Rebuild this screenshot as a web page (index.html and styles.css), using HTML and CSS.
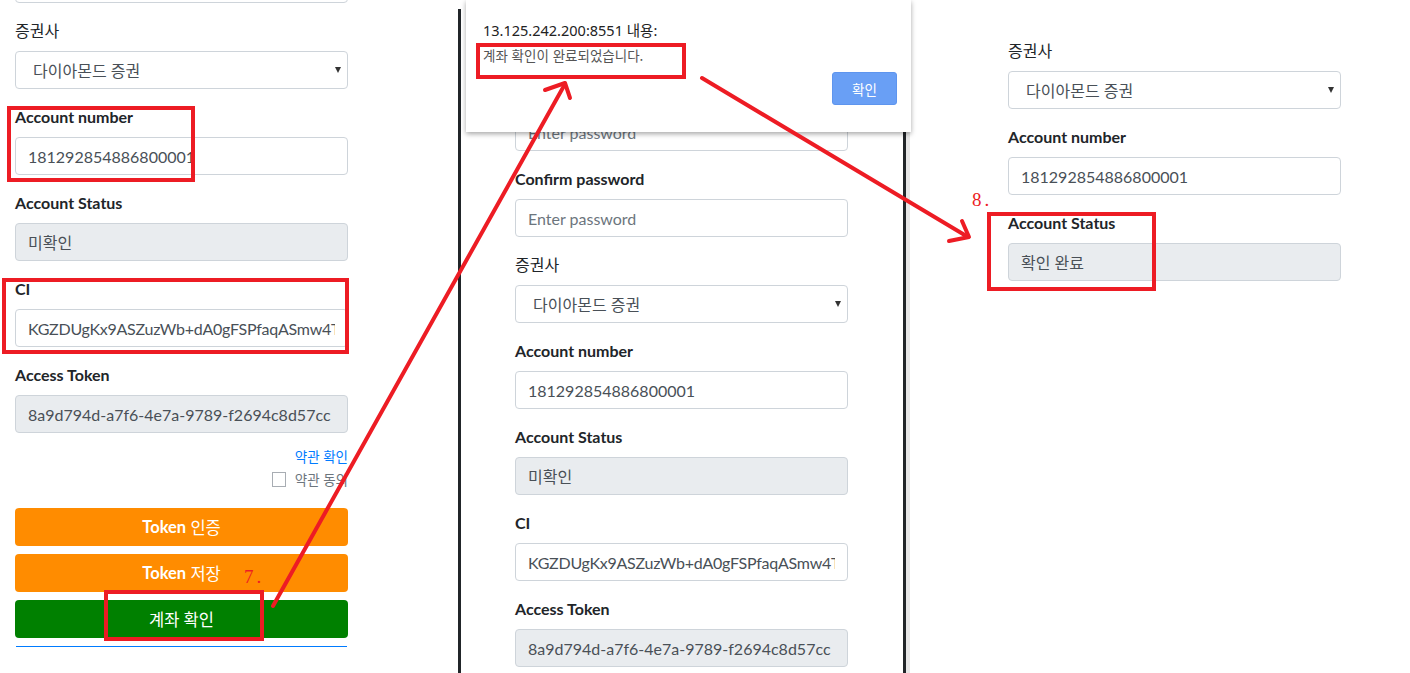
FILE: index.html
```html
<!DOCTYPE html>
<html lang="ko">
<head>
<meta charset="utf-8">
<title>계좌 확인</title>
<link rel="stylesheet" href="styles.css">
</head>
<body>
<div class="page">
  <section class="panel panel-left">
    <div class="group group-cut">
      <div class="control">&nbsp;</div>
    </div>
    <div class="group">
      <div class="label plain">증권사</div>
      <div class="control select"><span>다이아몬드 증권</span><span class="caret"></span></div>
    </div>
    <div class="group">
      <div class="label">Account number</div>
      <div class="control">181292854886800001</div>
    </div>
    <div class="group">
      <div class="label">Account Status</div>
      <div class="control readonly">미확인</div>
    </div>
    <div class="group">
      <div class="label">CI</div>
      <div class="control"><span class="clip">KGZDUgKx9ASZuzWb+dA0gFSPfaqASmw4Tc3</span></div>
    </div>
    <div class="group">
      <div class="label">Access Token</div>
      <div class="control readonly">8a9d794d-a7f6-4e7a-9789-f2694c8d57cc</div>
    </div>
    <div class="terms">
      <a class="terms-link">약관 확인</a>
      <div class="terms-check"><span class="checkbox"></span><span class="terms-text">약관 동의</span></div>
    </div>
    <div class="buttons">
      <div class="btn btn-orange"><b class="btn-latin">Token</b>&nbsp;인증</div>
      <div class="btn btn-orange"><b class="btn-latin">Token</b>&nbsp;저장</div>
      <div class="btn btn-green">계좌 확인</div>
    </div>
    <div class="rule"></div>
  </section>

  <section class="panel-mid-wrap">
    <div class="panel panel-mid">
      <div class="group">
        <div class="label">Password</div>
        <div class="control placeholder">Enter password</div>
      </div>
      <div class="group">
        <div class="label">Confirm password</div>
        <div class="control placeholder">Enter password</div>
      </div>
      <div class="group">
        <div class="label plain">증권사</div>
        <div class="control select"><span>다이아몬드 증권</span><span class="caret"></span></div>
      </div>
      <div class="group">
        <div class="label">Account number</div>
        <div class="control">181292854886800001</div>
      </div>
      <div class="group">
        <div class="label">Account Status</div>
        <div class="control readonly">미확인</div>
      </div>
      <div class="group">
        <div class="label">CI</div>
        <div class="control"><span class="clip">KGZDUgKx9ASZuzWb+dA0gFSPfaqASmw4Tc3</span></div>
      </div>
      <div class="group">
        <div class="label">Access Token</div>
        <div class="control readonly">8a9d794d-a7f6-4e7a-9789-f2694c8d57cc</div>
      </div>
    </div>
    <div class="scroll-strip"></div>
  </section>

  <section class="panel panel-right">
    <div class="group">
      <div class="label plain">증권사</div>
      <div class="control select"><span>다이아몬드 증권</span><span class="caret"></span></div>
    </div>
    <div class="group">
      <div class="label">Account number</div>
      <div class="control">181292854886800001</div>
    </div>
    <div class="group">
      <div class="label">Account Status</div>
      <div class="control readonly">확인 완료</div>
    </div>
  </section>

  <div class="dialog">
    <div class="dialog-title">13.125.242.200:8551 내용:</div>
    <div class="dialog-msg">계좌 확인이 완료되었습니다.</div>
    <div class="dialog-actions"><div class="dialog-btn">확인</div></div>
  </div>

  <div class="mark mark-acct"></div>
  <div class="mark mark-ci"></div>
  <div class="mark mark-btn"></div>
  <div class="mark mark-msg"></div>
  <div class="mark mark-status"></div>
  <div class="step step-7">7.</div>
  <div class="step step-8">8.</div>

  <svg class="arrows" width="1410" height="673" viewBox="0 0 1410 673">
    <g fill="none" stroke="#ed1c24" stroke-width="4" stroke-linecap="round" stroke-linejoin="round">
      <path d="M273 606 L565 84"/>
      <path d="M545 90 L565 83 L570 98"/>
      <path d="M702 78 L968 237"/>
      <path d="M962 221 L969 237 L949 241"/>
    </g>
  </svg>
</div>
</body>
</html>
```

FILE: styles.css
```css
* { box-sizing: border-box; }

html, body {
  margin: 0;
  padding: 0;
  background: #fff;
}

body {
  font-family: Lato, "Noto Sans CJK KR", sans-serif;
  color: #212529;
  font-size: 16px;
}

.page {
  position: relative;
  width: 1410px;
  height: 673px;
  overflow: hidden;
  display: flex;
  align-items: flex-start;
}

.panel {
  flex: none;
  width: 333px;
}

.panel-left {
  margin-left: 15px;
  margin-top: -35px;
}

.group {
  margin-bottom: 16px;
}

.label {
  font-weight: 700;
  font-size: 16px;
  line-height: 24px;
  margin-bottom: 8px;
  color: #212529;
}

.label.plain {
  font-weight: 400;
}

.control {
  height: 38px;
  border: 1px solid #ced4da;
  border-radius: 4px;
  padding: 0 12px;
  display: flex;
  align-items: center;
  font-size: 16px;
  color: #495057;
  background: #fff;
  white-space: nowrap;
  overflow: hidden;
}

.clip {
  display: block;
  overflow: hidden;
  white-space: nowrap;
  letter-spacing: -0.25px;
}

.control.readonly {
  background: #e9ecef;
}

.control.placeholder {
  color: #6c757d;
}

.control.select {
  justify-content: space-between;
  padding-left: 17px;
  padding-right: 6px;
}

.caret {
  width: 0;
  height: 0;
  border-left: 3px solid transparent;
  border-right: 3px solid transparent;
  border-top: 6px solid #333;
}

.terms {
  display: flex;
  flex-direction: column;
  align-items: flex-end;
  font-size: 13.5px;
  margin-bottom: 15px;
}

.terms-link {
  color: #007bff;
  line-height: 16px;
  height: 16px;
}

.terms-check {
  display: flex;
  align-items: center;
  gap: 9px;
  height: 28px;
  color: #6c757d;
}

.checkbox {
  width: 14px;
  height: 15px;
  border: 1px solid #a8adb3;
  background: #fff;
}

.buttons {
  display: flex;
  flex-direction: column;
  gap: 8px;
}

.btn {
  height: 38px;
  border-radius: 4px;
  color: #fff;
  font-size: 16.5px;
  font-weight: 400;
  display: flex;
  align-items: center;
  justify-content: center;
}

.btn-latin {
  font-weight: 700;
}

.btn-orange {
  background: #ff8c00;
}

.btn-green {
  background: #008000;
}

.rule {
  margin-top: 8px;
  margin-left: 1px;
  width: 331px;
  height: 1px;
  background: #007bff;
}

.panel-mid-wrap {
  flex: none;
  display: flex;
  margin-left: 110px;
  margin-top: 9px;
}

.panel-mid {
  width: auto;
  border-left: 3px solid #212529;
  border-right: 3px solid #212529;
  padding: 72px 55px 0 54px;
  height: 700px;
}

.panel-mid .group {
  width: 333px;
}

.scroll-strip {
  width: 4px;
  background: #e6e6e6;
  height: 700px;
}

.panel-right {
  margin-left: 98px;
  padding-top: 39px;
}

.dialog {
  position: absolute;
  left: 466px;
  top: 0;
  width: 445px;
  height: 132px;
  background: #fff;
  box-shadow: 0 2px 5px rgba(0, 0, 0, 0.35);
  padding: 19px 14px 0 17px;
  font-family: "Noto Sans", "Noto Sans CJK KR", sans-serif;
}

.dialog-title {
  font-size: 14.5px;
  line-height: 22px;
  color: #222;
}

.dialog-msg {
  font-size: 13.5px;
  line-height: 18px;
  margin-top: 5px;
  color: #555;
  font-family: "Noto Sans CJK KR", sans-serif;
}

.dialog-actions {
  display: flex;
  justify-content: flex-end;
  margin-top: 8px;
}

.dialog-btn {
  width: 65px;
  height: 33px;
  border-radius: 3px;
  background: #699ff5;
  border: 1px solid #5e95ee;
  color: #fff;
  font-size: 13.5px;
  display: flex;
  align-items: center;
  justify-content: center;
  font-family: "Noto Sans CJK KR", sans-serif;
}

.mark {
  position: absolute;
  border: 4px solid #ed1c24;
}

.mark-acct { left: 7px; top: 106px; width: 188px; height: 76px; }
.mark-ci { left: 2px; top: 278px; width: 347px; height: 76px; }
.mark-btn { left: 104px; top: 590px; width: 160px; height: 51px; }
.mark-msg { left: 476px; top: 43px; width: 210px; height: 36px; }
.mark-status { left: 987px; top: 212px; width: 169px; height: 79px; }

.step {
  position: absolute;
  color: #ed1c24;
  font-family: "Liberation Serif", serif;
  font-size: 19px;
  line-height: 19px;
  letter-spacing: 3px;
}

.step-7 { left: 244px; top: 567px; }
.step-8 { left: 972px; top: 190px; }

.arrows {
  position: absolute;
  left: 0;
  top: 0;
  pointer-events: none;
}
```
